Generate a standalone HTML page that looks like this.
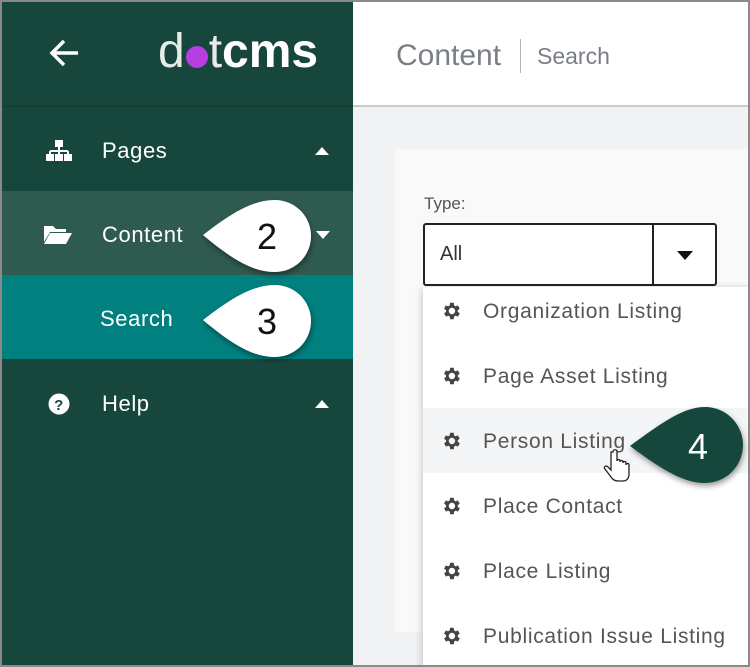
<!DOCTYPE html>
<html><head><meta charset="utf-8"><style>
*{margin:0;padding:0;box-sizing:border-box}
body{width:750px;height:667px;overflow:hidden;position:relative;font-family:"Liberation Sans",Arial,sans-serif;background:#f1f2f4}
.frame{position:absolute;inset:0;border:2px solid #8a8a8a;z-index:50;pointer-events:none}
.side{position:absolute;left:0;top:0;width:353px;height:667px;background:#17473c}
.top{position:absolute;left:0;top:0;width:353px;height:107px;border-bottom:1px solid #123a31}
.row{position:absolute;left:0;width:353px;height:84px;color:#fff;font-size:22px;letter-spacing:.6px}
.row span{position:absolute;left:102px;top:31px}
.head{position:absolute;left:353px;top:0;width:397px;height:107px;background:#fff;border-bottom:2px solid #c9cbcf}
.card{position:absolute;left:395px;top:149px;width:355px;height:483px;background:#f9f9fa}
.item{position:absolute;left:0;width:330px;height:65px;font-size:21px;color:#555;letter-spacing:.7px}
.item span{position:absolute;left:60px;top:22px}
.item svg{position:absolute;left:17px;top:22px}
</style></head><body>
<div class="side">
 <div class="top">
  <svg style="position:absolute;left:48px;top:38px" width="32" height="30" viewBox="0 0 32 30"><path d="M30 15H5M16 3L4 15l12 12" fill="none" stroke="#fff" stroke-width="3.5"/></svg>
  <div style="position:absolute;left:158px;top:26px;font-size:48px;color:#fff;letter-spacing:0px;line-height:52px"><span style="font-weight:300;color:#e8ece9">d</span><span style="display:inline-block;width:22px;height:22px;border-radius:50%;background:#b63ee0;margin:0 1px;vertical-align:-1px"></span><span style="font-weight:300;color:#e8ece9">t</span><b>cms</b></div>
 </div>
 <div class="row" style="top:107px"><svg style="position:absolute;left:46px;top:33px" width="26" height="22" viewBox="0 0 26 22"><rect x="9" y="0" width="8" height="7" fill="#fff"/><path d="M13 7v4M4 11h18M4 11v4M13 11v4M22 11v4" stroke="#fff" stroke-width="2"/><rect x="0" y="14" width="8" height="7" fill="#fff"/><rect x="9" y="14" width="8" height="7" fill="#fff"/><rect x="18" y="14" width="8" height="7" fill="#fff"/></svg><span>Pages</span><svg style="position:absolute;left:315px;top:40px" width="14" height="8"><path d="M0 8L7 0l7 8z" fill="#fff"/></svg></div>
 <div class="row" style="top:191px;background:#2f5a50"><svg style="position:absolute;left:44px;top:33px" width="28" height="20" viewBox="0 0 28 20"><path d="M0 2h9l3 3h10v3H6L0 18z" fill="#fff"/><path d="M6 9h22l-6 11H0z" fill="#fff"/></svg><span>Content</span><svg style="position:absolute;left:316px;top:40px" width="14" height="8"><path d="M0 0L7 8l7-8z" fill="#fff"/></svg></div>
 <div class="row" style="top:275px;background:#00807f"><span style="left:100px">Search</span></div>
 <div class="row" style="top:360px"><svg style="position:absolute;left:48px;top:33px" width="22" height="22" viewBox="0 0 22 22"><circle cx="11" cy="11" r="10.5" fill="#fff"/><text x="11" y="17" text-anchor="middle" font-size="15" font-weight="bold" fill="#17473c" font-family="Liberation Sans">?</text></svg><span>Help</span><svg style="position:absolute;left:315px;top:40px" width="14" height="8"><path d="M0 8L7 0l7 8z" fill="#fff"/></svg></div>
</div>
<div class="head">
 <div style="position:absolute;left:43px;top:39px;font-size:30px;color:#7a7f86">Content</div>
 <div style="position:absolute;left:167px;top:39px;width:1px;height:34px;background:#b0b3b8"></div>
 <div style="position:absolute;left:184px;top:43px;font-size:23px;color:#7a7f86">Search</div>
</div>
<div class="card">
 <div style="position:absolute;left:29px;top:45px;font-size:17px;color:#555">Type:</div>
 <div style="position:absolute;left:28px;top:74px;width:294px;height:63px;background:#fff;border:2px solid #222;border-radius:3px">
  <div style="position:absolute;left:15px;top:18px;font-size:20px;color:#333">All</div>
  <div style="position:absolute;left:227px;top:0;width:2px;height:59px;background:#222"></div>
  <svg style="position:absolute;left:252px;top:26px" width="16" height="9"><path d="M0 0h16L8 9z" fill="#111"/></svg>
 </div>
</div>
<div style="position:absolute;left:423px;top:287px;width:327px;height:380px;background:#fff;box-shadow:0 2px 8px rgba(0,0,0,.25);overflow:hidden">
 <div class="item" style="top:-9px"><svg width="22" height="22" viewBox="0 0 24 24"><path fill="#444" d="M19.4 13a7.5 7.5 0 000-2l2.1-1.6-2-3.5-2.5 1a7.6 7.6 0 00-1.7-1L15 3h-4l-.4 2.9a7.6 7.6 0 00-1.7 1l-2.5-1-2 3.5L6.6 11a7.5 7.5 0 000 2l-2.1 1.6 2 3.5 2.5-1a7.6 7.6 0 001.7 1L11 21h4l.4-2.9a7.6 7.6 0 001.7-1l2.5 1 2-3.5zM13 15.5a3.5 3.5 0 110-7 3.5 3.5 0 010 7z"/></svg><span>Organization Listing</span></div>
 <div class="item" style="top:56px"><svg width="22" height="22" viewBox="0 0 24 24"><path fill="#444" d="M19.4 13a7.5 7.5 0 000-2l2.1-1.6-2-3.5-2.5 1a7.6 7.6 0 00-1.7-1L15 3h-4l-.4 2.9a7.6 7.6 0 00-1.7 1l-2.5-1-2 3.5L6.6 11a7.5 7.5 0 000 2l-2.1 1.6 2 3.5 2.5-1a7.6 7.6 0 001.7 1L11 21h4l.4-2.9a7.6 7.6 0 001.7-1l2.5 1 2-3.5zM13 15.5a3.5 3.5 0 110-7 3.5 3.5 0 010 7z"/></svg><span>Page Asset Listing</span></div>
 <div class="item" style="top:121px;background:#f4f5f6"><svg width="22" height="22" viewBox="0 0 24 24"><path fill="#444" d="M19.4 13a7.5 7.5 0 000-2l2.1-1.6-2-3.5-2.5 1a7.6 7.6 0 00-1.7-1L15 3h-4l-.4 2.9a7.6 7.6 0 00-1.7 1l-2.5-1-2 3.5L6.6 11a7.5 7.5 0 000 2l-2.1 1.6 2 3.5 2.5-1a7.6 7.6 0 001.7 1L11 21h4l.4-2.9a7.6 7.6 0 001.7-1l2.5 1 2-3.5zM13 15.5a3.5 3.5 0 110-7 3.5 3.5 0 010 7z"/></svg><span>Person Listing</span></div>
 <div class="item" style="top:186px"><svg width="22" height="22" viewBox="0 0 24 24"><path fill="#444" d="M19.4 13a7.5 7.5 0 000-2l2.1-1.6-2-3.5-2.5 1a7.6 7.6 0 00-1.7-1L15 3h-4l-.4 2.9a7.6 7.6 0 00-1.7 1l-2.5-1-2 3.5L6.6 11a7.5 7.5 0 000 2l-2.1 1.6 2 3.5 2.5-1a7.6 7.6 0 001.7 1L11 21h4l.4-2.9a7.6 7.6 0 001.7-1l2.5 1 2-3.5zM13 15.5a3.5 3.5 0 110-7 3.5 3.5 0 010 7z"/></svg><span>Place Contact</span></div>
 <div class="item" style="top:251px"><svg width="22" height="22" viewBox="0 0 24 24"><path fill="#444" d="M19.4 13a7.5 7.5 0 000-2l2.1-1.6-2-3.5-2.5 1a7.6 7.6 0 00-1.7-1L15 3h-4l-.4 2.9a7.6 7.6 0 00-1.7 1l-2.5-1-2 3.5L6.6 11a7.5 7.5 0 000 2l-2.1 1.6 2 3.5 2.5-1a7.6 7.6 0 001.7 1L11 21h4l.4-2.9a7.6 7.6 0 001.7-1l2.5 1 2-3.5zM13 15.5a3.5 3.5 0 110-7 3.5 3.5 0 010 7z"/></svg><span>Place Listing</span></div>
 <div class="item" style="top:316px"><svg width="22" height="22" viewBox="0 0 24 24"><path fill="#444" d="M19.4 13a7.5 7.5 0 000-2l2.1-1.6-2-3.5-2.5 1a7.6 7.6 0 00-1.7-1L15 3h-4l-.4 2.9a7.6 7.6 0 00-1.7 1l-2.5-1-2 3.5L6.6 11a7.5 7.5 0 000 2l-2.1 1.6 2 3.5 2.5-1a7.6 7.6 0 001.7 1L11 21h4l.4-2.9a7.6 7.6 0 001.7-1l2.5 1 2-3.5zM13 15.5a3.5 3.5 0 110-7 3.5 3.5 0 010 7z"/></svg><span>Publication Issue Listing</span></div>
</div>
<svg style="position:absolute;left:0;top:0;z-index:20" width="750" height="667">
 <defs><filter id="s" x="-20%" y="-20%" width="140%" height="160%"><feDropShadow dx="1" dy="3" stdDeviation="3" flood-opacity=".4"/></filter></defs>
 <g filter="url(#s)">
  <path d="M203 235 C235 210 255 200 275 200 A36 36 0 0 1 275 272 C255 272 235 262 203 235Z" fill="#fff"/>
  <path d="M203 320 C235 295 255 285 275 285 A36 36 0 0 1 275 357 C255 357 235 347 203 320Z" fill="#fff"/>
  <path d="M630 446 C665 420 685 407 705 407 A38 38 0 0 1 705 483 C685 483 665 472 630 446Z" fill="#17473c"/>
 </g>
 <text x="267" y="249" text-anchor="middle" font-size="36" font-family="Liberation Sans" fill="#111">2</text>
 <text x="267" y="334" text-anchor="middle" font-size="36" font-family="Liberation Sans" fill="#111">3</text>
 <text x="698" y="459" text-anchor="middle" font-size="36" font-family="Liberation Sans" fill="#fff">4</text>
 <path d="M611 452v18l-3-3c-2-2-5 0-3 2l6 8c2 3 4 4 8 4h4c4 0 6-3 6-7v-9c0-2-3-2-3 0v-2c0-2-3-2-3 0v-1c0-2-3-2-3 0v-1c0-2-3-2-3 0v-9c0-3-4-3-4 0z" fill="#fff" stroke="#222" stroke-width="1.3"/>
</svg>
<div class="frame"></div>
</body></html>
